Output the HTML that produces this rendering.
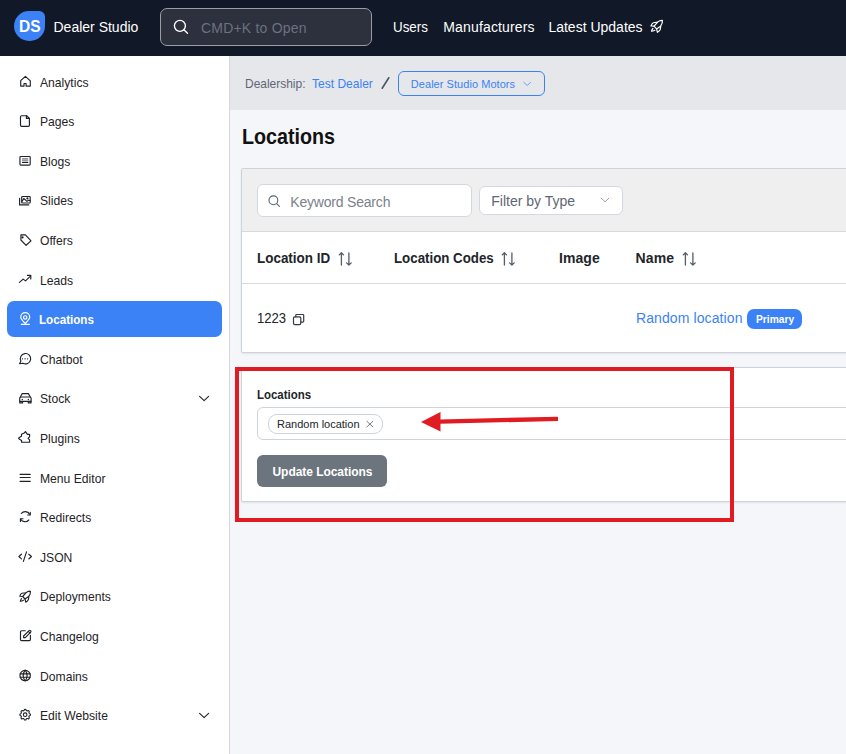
<!DOCTYPE html>
<html><head><meta charset="utf-8"><style>
*{margin:0;padding:0;box-sizing:border-box}
html,body{width:846px;height:754px;overflow:hidden;background:#f4f6f9;font-family:"Liberation Sans", sans-serif}
.t{position:absolute;white-space:nowrap}
.ic{position:absolute;fill:none;stroke:currentColor;stroke-width:2;stroke-linecap:round;stroke-linejoin:round}
.abs{position:absolute}
</style></head><body>
<!-- header -->
<div class="abs" style="left:0;top:0;width:846px;height:56px;background:#111827"></div>
<div class="abs" style="left:14px;top:11px;width:31px;height:30px;background:#3b82f6;border-radius:16px 6px 16px 16px"></div>
<div class="t" style="left:18.70px;top:18.86px;font-size:16px;line-height:16px;color:#ffffff;font-weight:700;letter-spacing:0px;transform:scaleX(0.97);transform-origin:0 0;">DS</div>
<div class="t" style="left:53.50px;top:20.05px;font-size:14px;line-height:14px;color:#ffffff;font-weight:400;letter-spacing:0px;">Dealer Studio</div>
<div class="abs" style="left:160px;top:8px;width:212px;height:37.8px;background:#2d303d;border:1px solid #9a9da6;border-radius:7px"></div>
<svg class="ic" style="left:172px;top:18px;color:#ffffff" width="18" height="18" viewBox="0 0 18 18"><circle cx="7.9" cy="7.8" r="5.5" stroke-width="1.35"/><path d="M11.9 11.8l3.6 3.5" stroke-width="1.35"/></svg>
<div class="t" style="left:201.00px;top:21.15px;font-size:14px;line-height:14px;color:#6b7280;font-weight:400;letter-spacing:0.2px;">CMD+K to Open</div>
<div class="t" style="left:392.70px;top:20.35px;font-size:14px;line-height:14px;color:#ffffff;font-weight:400;letter-spacing:0px;transform:scaleX(0.955);transform-origin:0 0;">Users</div>
<div class="t" style="left:443.30px;top:20.35px;font-size:14px;line-height:14px;color:#ffffff;font-weight:400;letter-spacing:0.15px;">Manufacturers</div>
<div class="t" style="left:548.40px;top:20.35px;font-size:14px;line-height:14px;color:#ffffff;font-weight:400;letter-spacing:0px;">Latest Updates</div>
<svg class="ic" style="left:648.9px;top:17.2px;color:#ffffff;stroke-width:1.1" width="17.3" height="17.3" viewBox="0 0 16 16"><path d="M4.7 8.5L1.8 8.3C2.3 6.8 3 5.6 4 5.3L8 4.7C9.3 3.6 10.8 3.1 12.4 3.2 12.6 4.8 12.1 6.6 10.9 8.2L10.4 11.5C9.8 12.6 8.9 13.6 7.8 14.2L7 11z"/><path d="M3.6 10.6C2.9 11.3 2.4 12.3 2.3 13.2 3.4 13.1 4.5 12.7 5.4 12.2"/><path d="M4.7 8.5L7.6 5.2M7 11L10.6 8.6"/></svg>
<!-- sidebar -->
<div class="abs" style="left:0;top:56px;width:229px;height:698px;background:#ffffff"></div>
<div class="abs" style="left:229px;top:56px;width:1px;height:698px;background:#d4d8de"></div>
<svg class="ic" style="left:16px;top:72px;color:#1f2328;stroke-width:1.15" width="20" height="20" viewBox="0 0 20 20"><path d="M4.7 14.1V8.7L9.4 4.3l4.9 4.5v5.3h-4.2v-2.6H8v2.6z"/></svg><div class="t" style="left:40.00px;top:75.60px;font-size:13px;line-height:13px;color:#1f2328;font-weight:400;letter-spacing:0px;transform:scaleX(0.934);transform-origin:0 0;">Analytics</div><svg class="ic" style="left:16px;top:111px;color:#1f2328;stroke-width:1.15" width="20" height="20" viewBox="0 0 20 20"><path d="M5.5 4.7h5.1l2.8 2.8v6.8a1 1 0 0 1-1 1H5.5a1 1 0 0 1-1-1V5.7a1 1 0 0 1 1-1z"/><path d="M10.4 4.8v2.6h2.9"/></svg><div class="t" style="left:40.00px;top:114.60px;font-size:13px;line-height:13px;color:#1f2328;font-weight:400;letter-spacing:0px;transform:scaleX(0.934);transform-origin:0 0;">Pages</div><svg class="ic" style="left:16px;top:151px;color:#1f2328;stroke-width:1.15" width="20" height="20" viewBox="0 0 20 20"><rect x="3.95" y="5.5" width="10.25" height="8.6" rx=".8"/><path d="M6.5 7.8h5.3M6.5 9.2h5.3" stroke-width=".9" stroke-opacity=".75"/><path d="M6.5 11.4h5.3"/></svg><div class="t" style="left:40.00px;top:154.60px;font-size:13px;line-height:13px;color:#1f2328;font-weight:400;letter-spacing:0px;transform:scaleX(0.934);transform-origin:0 0;">Blogs</div><svg class="ic" style="left:16px;top:190px;color:#1f2328;stroke-width:1.15" width="20" height="20" viewBox="0 0 20 20"><rect x="5.7" y="6.5" width="8.5" height="6.5" rx=".8"/><path d="M3.6 8.2v6.7h9.1"/><path d="M6.2 11.1l1.6-2.6 3.2 2.9 1.5-1.1 1.7.2"/><circle cx="11.4" cy="8.4" r=".5" fill="currentColor"/></svg><div class="t" style="left:40.00px;top:193.60px;font-size:13px;line-height:13px;color:#1f2328;font-weight:400;letter-spacing:0px;transform:scaleX(0.934);transform-origin:0 0;">Slides</div><svg class="ic" style="left:16px;top:230px;color:#1f2328;stroke-width:1.15" width="20" height="20" viewBox="0 0 20 20"><path d="M4.9 4.9h4.5l5.6 6-4.9 4.4-5.2-5.3z"/><circle cx="6.5" cy="7.4" r=".55" fill="currentColor"/></svg><div class="t" style="left:40.00px;top:233.60px;font-size:13px;line-height:13px;color:#1f2328;font-weight:400;letter-spacing:0px;transform:scaleX(0.934);transform-origin:0 0;">Offers</div><svg class="ic" style="left:16px;top:270px;color:#1f2328;stroke-width:1.15" width="20" height="20" viewBox="0 0 20 20"><path d="M3.4 12.4l3.8-3.3 2.3 1.8 5-4.7"/><path d="M11.4 5.4h3.4v3.5"/></svg><div class="t" style="left:40.00px;top:273.60px;font-size:13px;line-height:13px;color:#1f2328;font-weight:400;letter-spacing:0px;transform:scaleX(0.934);transform-origin:0 0;">Leads</div><div style="position:absolute;left:7px;top:300.86px;width:215px;height:36px;border-radius:7px;background:#3b82f6"></div><svg class="ic" style="left:16px;top:309px;color:#ffffff;stroke-width:1.15" width="20" height="20" viewBox="0 0 20 20"><path d="M9.2 14.4C7.2 12.4 4.7 10.4 4.7 8.1a4.5 4.5 0 0 1 9 0c0 2.3-2.5 4.3-4.5 6.3z"/><circle cx="9.2" cy="8.4" r="1.7"/><path d="M5.3 15.4h8"/></svg><div class="t" style="left:39.30px;top:313.36px;font-size:13px;line-height:13px;color:#ffffff;font-weight:700;letter-spacing:0px;transform:scaleX(0.895);transform-origin:0 0;">Locations</div><svg class="ic" style="left:16px;top:349px;color:#1f2328;stroke-width:1.15" width="20" height="20" viewBox="0 0 20 20"><path d="M3.6 14.7l1.3-2.6A5.2 5.2 0 1 1 6.9 14.2z"/><path d="M6.4 9.8h.1M9 9.8h.1M11.5 9.8h.1" stroke-width="1.3"/></svg><div class="t" style="left:40.00px;top:352.60px;font-size:13px;line-height:13px;color:#1f2328;font-weight:400;letter-spacing:0px;transform:scaleX(0.934);transform-origin:0 0;">Chatbot</div><svg class="ic" style="left:16px;top:388px;color:#1f2328;stroke-width:1.15" width="20" height="20" viewBox="0 0 20 20"><path d="M4.4 9L6.2 5.6h6.2L14.3 9"/><path d="M3.7 13.3v-3.1A1.2 1.2 0 0 1 4.9 9h9A1.2 1.2 0 0 1 15.1 10.2v3.1z"/><path d="M3.8 13.3v1.6h2.8v-1.5M12.3 13.4v1.5h2.7v-1.6"/><path d="M6.2 11.4h.1M12.3 11.4h.1" stroke-width="1.3"/></svg><div class="t" style="left:40.00px;top:391.60px;font-size:13px;line-height:13px;color:#1f2328;font-weight:400;letter-spacing:0px;transform:scaleX(0.934);transform-origin:0 0;">Stock</div><svg class="ic" style="left:194px;top:388px;color:#1f2328" width="20" height="20" viewBox="0 0 20 20"><path d="M5.6 8.4l4.5 4.2 4.5-4.2" stroke-width="1.15"/></svg><svg class="ic" style="left:16px;top:428px;color:#1f2328;stroke-width:1.15" width="20" height="20" viewBox="0 0 20 20"><path d="M5.6 14.2h8v-2.4l-1.5-1.5 1.5-1.7V6.4h-2.2L9.5 3.6 8.2 5 5.5 6.3v1.9L3.3 9.5l-.7.8.8.9 2.2 1.4z"/></svg><div class="t" style="left:40.00px;top:431.60px;font-size:13px;line-height:13px;color:#1f2328;font-weight:400;letter-spacing:0px;transform:scaleX(0.934);transform-origin:0 0;">Plugins</div><svg class="ic" style="left:16px;top:468px;color:#1f2328;stroke-width:1.15" width="20" height="20" viewBox="0 0 20 20"><path d="M4.1 6.4h10.1M4.1 9.5h10.1M4.1 13.4h10.1"/></svg><div class="t" style="left:40.00px;top:471.60px;font-size:13px;line-height:13px;color:#1f2328;font-weight:400;letter-spacing:0px;transform:scaleX(0.934);transform-origin:0 0;">Menu Editor</div><svg class="ic" style="left:16px;top:507px;color:#1f2328;stroke-width:1.15" width="20" height="20" viewBox="0 0 20 20"><path d="M5.3 6.5a5 5 0 0 1 8.3 .6"/><path d="M14.3 5.4v2.6h-2.6"/><path d="M12.8 13a5 5 0 0 1-8.1-.8"/><path d="M4.4 14.4v-2.6h2.6"/></svg><div class="t" style="left:40.00px;top:510.60px;font-size:13px;line-height:13px;color:#1f2328;font-weight:400;letter-spacing:0px;transform:scaleX(0.934);transform-origin:0 0;">Redirects</div><svg class="ic" style="left:16px;top:547px;color:#1f2328;stroke-width:1.15" width="20" height="20" viewBox="0 0 20 20"><path d="M5.5 7.2L2.9 9.5l2.6 2.4M12.8 7.2l2.7 2.3-2.6 2.3M10.5 4.9L7.4 14.4"/></svg><div class="t" style="left:40.00px;top:550.60px;font-size:13px;line-height:13px;color:#1f2328;font-weight:400;letter-spacing:0px;transform:scaleX(0.934);transform-origin:0 0;">JSON</div><svg class="ic" style="left:16px;top:586px;color:#1f2328;stroke-width:1.15" width="20" height="20" viewBox="0 0 20 20"><g transform="translate(2 2)"><path d="M4.7 8.5L1.8 8.3C2.3 6.8 3 5.6 4 5.3L8 4.7C9.3 3.6 10.8 3.1 12.4 3.2 12.6 4.8 12.1 6.6 10.9 8.2L10.4 11.5C9.8 12.6 8.9 13.6 7.8 14.2L7 11z"/><path d="M3.6 10.6C2.9 11.3 2.4 12.3 2.3 13.2 3.4 13.1 4.5 12.7 5.4 12.2"/><path d="M4.7 8.5L7.6 5.2M7 11L10.6 8.6"/></g></svg><div class="t" style="left:40.00px;top:589.60px;font-size:13px;line-height:13px;color:#1f2328;font-weight:400;letter-spacing:0px;transform:scaleX(0.934);transform-origin:0 0;">Deployments</div><svg class="ic" style="left:16px;top:626px;color:#1f2328;stroke-width:1.15" width="20" height="20" viewBox="0 0 20 20"><path d="M9.3 4.7H5.5a1 1 0 0 0-1 1v7.9a1 1 0 0 0 1 1h7.9a1 1 0 0 0 1-1V9.2"/><path d="M7.6 11.6V10l5.5-5.4a1 1 0 0 1 1.4 0l.2.2a1 1 0 0 1 0 1.4l-5.4 5.4z"/><path d="M12.3 5.4l1.8 1.8"/></svg><div class="t" style="left:40.00px;top:629.60px;font-size:13px;line-height:13px;color:#1f2328;font-weight:400;letter-spacing:0px;transform:scaleX(0.934);transform-origin:0 0;">Changelog</div><svg class="ic" style="left:16px;top:666px;color:#1f2328;stroke-width:1.15" width="20" height="20" viewBox="0 0 20 20"><g transform="translate(2.21 2.61) scale(.578)" stroke-width="2"><path d="M3 12a9 9 0 1 0 18 0a9 9 0 0 0 -18 0"/><path d="M3.6 9h16.8"/><path d="M3.6 15h16.8"/><path d="M11.5 3a17 17 0 0 0 0 18"/><path d="M12.5 3a17 17 0 0 1 0 18"/></g></svg><div class="t" style="left:40.00px;top:669.60px;font-size:13px;line-height:13px;color:#1f2328;font-weight:400;letter-spacing:0px;transform:scaleX(0.934);transform-origin:0 0;">Domains</div><svg class="ic" style="left:16px;top:705px;color:#1f2328;stroke-width:1.15" width="20" height="20" viewBox="0 0 20 20"><g transform="translate(2.02 2.57) scale(.594)" stroke-width="1.9"><path d="M10.325 4.317c.426 -1.756 2.924 -1.756 3.35 0a1.724 1.724 0 0 0 2.573 1.066c1.543 -.94 3.31 .826 2.37 2.37a1.724 1.724 0 0 0 1.065 2.572c1.756 .426 1.756 2.924 0 3.35a1.724 1.724 0 0 0 -1.066 2.573c.94 1.543 -.826 3.31 -2.37 2.37a1.724 1.724 0 0 0 -2.572 1.065c-.426 1.756 -2.924 1.756 -3.35 0a1.724 1.724 0 0 0 -2.573 -1.066c-1.543 .94 -3.31 -.826 -2.37 -2.37a1.724 1.724 0 0 0 -1.065 -2.572c-1.756 -.426 -1.756 -2.924 0 -3.35a1.724 1.724 0 0 0 1.066 -2.573c-.94 -1.543 .826 -3.31 2.37 -2.37c1 .608 2.296 .07 2.572 -1.065z"/><path d="M9 12a3 3 0 1 0 6 0a3 3 0 0 0 -6 0"/></g></svg><div class="t" style="left:40.00px;top:708.60px;font-size:13px;line-height:13px;color:#1f2328;font-weight:400;letter-spacing:0px;transform:scaleX(0.934);transform-origin:0 0;">Edit Website</div><svg class="ic" style="left:194px;top:705px;color:#1f2328" width="20" height="20" viewBox="0 0 20 20"><path d="M5.6 8.4l4.5 4.2 4.5-4.2" stroke-width="1.15"/></svg>
<!-- breadcrumb -->
<div class="abs" style="left:230px;top:56px;width:616px;height:54px;background:#e5e7eb"></div>
<div class="t" style="left:245.30px;top:77.30px;font-size:13px;line-height:13px;color:#5f6673;font-weight:400;letter-spacing:0px;transform:scaleX(0.92);transform-origin:0 0;">Dealership:</div>
<div class="t" style="left:311.60px;top:77.30px;font-size:13px;line-height:13px;color:#3b82f6;font-weight:400;letter-spacing:0px;transform:scaleX(0.925);transform-origin:0 0;">Test Dealer</div>
<svg class="ic" style="left:380px;top:76px;color:#4b5563" width="11" height="14" viewBox="0 0 11 14"><path d="M8.8 1.8L2.2 12.2" stroke-width="1.6"/></svg>
<div class="abs" style="left:398px;top:71px;width:147px;height:25px;border:1px solid #3b82f6;border-radius:6px"></div>
<div class="t" style="left:410.80px;top:78.79px;font-size:11px;line-height:11px;color:#3b82f6;font-weight:400;letter-spacing:0.05px;">Dealer Studio Motors</div>
<svg class="ic" style="left:522px;top:80px;color:#5d95f4" width="10" height="8" viewBox="0 0 10 8"><path d="M1.9 2.4l3.3 3.1 3.3-3.1" stroke-width=".9"/></svg>
<!-- heading -->
<div class="t" style="left:241.80px;top:126.15px;font-size:22.5px;line-height:22.5px;color:#111111;font-weight:700;letter-spacing:0px;transform:scaleX(0.875);transform-origin:0 0">Locations</div>
<!-- card 1 -->
<div class="abs" style="left:241px;top:168px;width:640px;height:184.8px;background:#ffffff;border:1px solid #cdd3db;border-radius:2px;box-shadow:0 1px 2px rgba(0,0,0,.08);overflow:hidden">
  <div class="abs" style="left:0;top:0;width:100%;height:63px;background:#efefef;border-bottom:1px solid #d5dae1"></div>
  <div class="abs" style="left:0;top:114px;width:100%;height:1px;background:#d5dae1"></div>
</div>
<div class="abs" style="left:257px;top:184.3px;width:214.5px;height:32.3px;background:#fff;border:1px solid #d3d9e0;border-radius:6px"></div>
<svg class="ic" style="left:266px;top:193px;color:#5c636d" width="16" height="16" viewBox="0 0 16 16"><circle cx="7.4" cy="7.3" r="4.4" stroke-width="1.1"/><path d="M10.6 10.6l2.8 2.8" stroke-width="1.1"/></svg>
<div class="t" style="left:290.30px;top:195.45px;font-size:14px;line-height:14px;color:#7b828c;font-weight:400;letter-spacing:-0.2px;">Keyword Search</div>
<div class="abs" style="left:479px;top:186px;width:144px;height:28.5px;background:#fff;border:1px solid #d3d9e0;border-radius:6px"></div>
<div class="t" style="left:491.30px;top:194.35px;font-size:14px;line-height:14px;color:#5f6673;font-weight:400;letter-spacing:0px;">Filter by Type</div>
<svg class="ic" style="left:600px;top:196px;color:#9ca3af" width="10" height="8" viewBox="0 0 10 8"><path d="M1.2 2.2l3.8 3.6 3.8-3.6" stroke-width="1"/></svg>
<div class="t" style="left:257.20px;top:250.85px;font-size:14px;line-height:14px;color:#212529;font-weight:700;letter-spacing:0px;transform:scaleX(0.96);transform-origin:0 0;">Location ID</div>
<div class="t" style="left:394.00px;top:250.85px;font-size:14px;line-height:14px;color:#212529;font-weight:700;letter-spacing:0px;transform:scaleX(0.95);transform-origin:0 0;">Location Codes</div>
<div class="t" style="left:558.90px;top:250.85px;font-size:14px;line-height:14px;color:#212529;font-weight:700;letter-spacing:0.1px;">Image</div>
<div class="t" style="left:635.60px;top:250.85px;font-size:14px;line-height:14px;color:#212529;font-weight:700;letter-spacing:0.1px;">Name</div>
<svg class="ic" style="left:338px;top:251px;color:#555d68" width="15" height="16" viewBox="0 0 15 16"><path d="M3.4 14.1V1.9M1.3 3.9L3.4 1.8 5.5 3.9M10.9 2v12.1M8.6 11.9l2.3 2.2 2.3-2.2" stroke-width="1.3"/></svg><svg class="ic" style="left:500.5px;top:251px;color:#555d68" width="15" height="16" viewBox="0 0 15 16"><path d="M3.4 14.1V1.9M1.3 3.9L3.4 1.8 5.5 3.9M10.9 2v12.1M8.6 11.9l2.3 2.2 2.3-2.2" stroke-width="1.3"/></svg><svg class="ic" style="left:681.5px;top:251px;color:#555d68" width="15" height="16" viewBox="0 0 15 16"><path d="M3.4 14.1V1.9M1.3 3.9L3.4 1.8 5.5 3.9M10.9 2v12.1M8.6 11.9l2.3 2.2 2.3-2.2" stroke-width="1.3"/></svg>
<div class="t" style="left:257.20px;top:310.65px;font-size:14px;line-height:14px;color:#212529;font-weight:400;letter-spacing:0px;transform:scaleX(0.935);transform-origin:0 0;">1223</div>
<svg class="ic" style="left:292px;top:313px;color:#333a42" width="13" height="13" viewBox="0 0 13 13"><rect x="1.5" y="3.8" width="7.3" height="7.8" rx="1.3" stroke-width="1.2"/><path d="M3.8 3.8V2.3a.8.8 0 0 1 .8-.8h6.3a.8.8 0 0 1 .8.8v6a.8.8 0 0 1-.8.8H8.8" stroke-width="1.2"/></svg>
<div class="t" style="left:636.00px;top:311.15px;font-size:14px;line-height:14px;color:#3b82f6;font-weight:400;letter-spacing:0.1px;">Random location</div>
<div class="abs" style="left:747px;top:308.7px;width:55px;height:20.3px;background:#3b82f6;border-radius:7px"></div>
<div class="t" style="left:755.60px;top:313.69px;font-size:11px;line-height:11px;color:#ffffff;font-weight:700;letter-spacing:0px;transform:scaleX(0.93);transform-origin:0 0;">Primary</div>
<!-- card 2 -->
<div class="abs" style="left:241px;top:367px;width:640px;height:134.5px;background:#ffffff;border:1px solid #cdd3db;border-radius:2px;box-shadow:0 1px 2px rgba(0,0,0,.08)"></div>
<div class="t" style="left:257.10px;top:388.94px;font-size:12px;line-height:12px;color:#212529;font-weight:700;letter-spacing:0px;transform:scaleX(0.955);transform-origin:0 0;">Locations</div>
<div class="abs" style="left:257px;top:407px;width:620px;height:33px;border:1px solid #cfd4da;border-radius:6px"></div>
<div class="abs" style="left:268px;top:414px;width:115px;height:20px;border:1px solid #cfd4da;border-radius:9px"></div>
<div class="t" style="left:277.00px;top:419.09px;font-size:11px;line-height:11px;color:#212529;font-weight:400;letter-spacing:0px;">Random location</div>
<svg class="ic" style="left:364.5px;top:419px;color:#6b7280" width="10" height="10" viewBox="0 0 10 10"><path d="M1.9 2.3l6 5.6M7.9 2.3l-6 5.6" stroke-width=".95"/></svg>
<div class="abs" style="left:257px;top:455px;width:130px;height:32px;background:#6c757d;border-radius:6px"></div>
<div class="t" style="left:272.50px;top:465.54px;font-size:12px;line-height:12px;color:#ffffff;font-weight:700;letter-spacing:-0.05px;">Update Locations</div>
<!-- annotation -->
<div class="abs" style="left:235px;top:367px;width:499px;height:155px;border:4px solid #e01b22"></div>
<svg class="abs" style="left:0;top:0" width="846" height="754" viewBox="0 0 846 754"><path d="M558 418.8L440 421.6" stroke="#e01b22" stroke-width="4.3" fill="none"/><path d="M421 422L440.5 412L440.5 431.6z" fill="#e01b22"/></svg>
</body></html>
